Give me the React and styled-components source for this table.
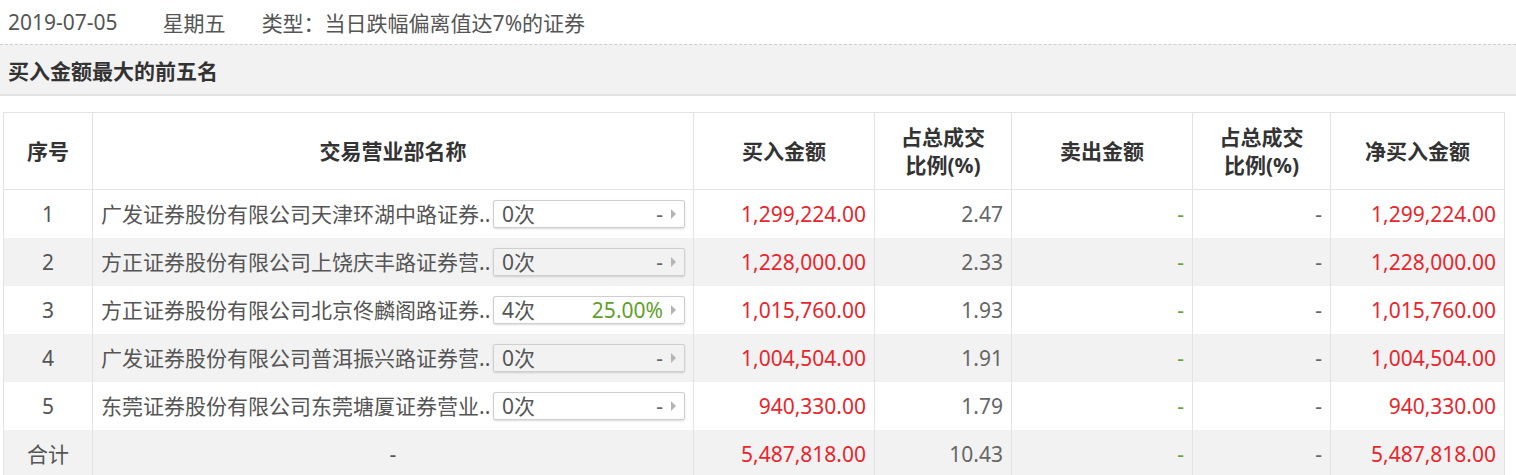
import React from "react";
import styled, { createGlobalStyle } from "styled-components";

const GlobalStyle = createGlobalStyle`
  html, body {
    margin: 0;
    padding: 0;
    background: #fff;
  }
  body {
    font-family: "Noto Sans", "Noto Sans CJK SC", sans-serif;
    color: #555;
  }
`;

const rows = [
  { id: 1, name: "广发证券股份有限公司天津环湖中路证券..", times: "0次", rate: "-", buy: "1,299,224.00", buyPct: "2.47", net: "1,299,224.00" },
  { id: 2, name: "方正证券股份有限公司上饶庆丰路证券营..", times: "0次", rate: "-", buy: "1,228,000.00", buyPct: "2.33", net: "1,228,000.00" },
  { id: 3, name: "方正证券股份有限公司北京佟麟阁路证券..", times: "4次", rate: "25.00%", buy: "1,015,760.00", buyPct: "1.93", net: "1,015,760.00" },
  { id: 4, name: "广发证券股份有限公司普洱振兴路证券营..", times: "0次", rate: "-", buy: "1,004,504.00", buyPct: "1.91", net: "1,004,504.00" },
  { id: 5, name: "东莞证券股份有限公司东莞塘厦证券营业..", times: "0次", rate: "-", buy: "940,330.00", buyPct: "1.79", net: "940,330.00" },
];

const Page = styled.div`
  width: 1516px;
`;

const InfoLine = styled.div`
  display: flex;
  align-items: center;
  height: 44px;
  padding-left: 8px;
  font-size: 21px;
  color: #555;
`;

const InfoItem = styled.span`
  margin-right: ${(p) => p.$gap || 0}px;
`;

const SectionTitle = styled.div`
  height: 49px;
  display: flex;
  align-items: center;
  padding-left: 8px;
  background: #f2f2f2;
  border-top: 1px dashed #cfcfcf;
  border-bottom: 2px solid #e2e2e2;
  font-size: 21px;
  font-weight: 700;
  color: #333;
`;

const Table = styled.table`
  margin: 16px 0 0 3px;
  width: 1501px;
  table-layout: fixed;
  border-collapse: collapse;
  font-size: 21px;
  border: 1px solid #e3e3e3;
`;

const HeadCell = styled.th`
  height: 76px;
  padding: 0 6px;
  font-weight: 700;
  color: #333;
  line-height: 28px;
  text-align: center;
  border: 1px solid #e3e3e3;
`;

const Row = styled.tr`
  background: ${(p) => (p.$shaded ? "#f2f2f2" : "#fff")};
`;

const Cell = styled.td`
  height: 48px;
  padding: 0 8px;
  text-align: ${(p) => p.$align || "left"};
  color: ${(p) => p.$color || "#555"};
  border-left: 1px solid #e3e3e3;
  border-right: 1px solid #e3e3e3;
  white-space: nowrap;
  line-height: 28px;
`;

const NameWrap = styled.div`
  display: flex;
  align-items: center;
  justify-content: space-between;
`;

const NameText = styled.span`
  overflow: hidden;
  white-space: nowrap;
`;

const CountBox = styled.div`
  flex: 0 0 192px;
  box-sizing: border-box;
  height: 28px;
  display: flex;
  align-items: center;
  padding: 0 8px;
  margin-left: 3px;
  border: 1px solid #cfcfcf;
  border-radius: 2px;
  box-shadow: 0 1px 2px rgba(0, 0, 0, 0.15);
  color: #555;
`;

const Times = styled.span`
  flex: 1;
`;

const Rate = styled.span`
  color: ${(p) => (p.$active ? "#5f9f2b" : "#666")};
`;

const Arrow = styled.span`
  margin-left: 8px;
  width: 0;
  height: 0;
  border-top: 5px solid transparent;
  border-bottom: 5px solid transparent;
  border-left: 5px solid #b5b5b5;
`;

const RED = "#e8262d";
const GREEN = "#6aa339";

export default function App() {
  return (
    <Page>
      <GlobalStyle />
      <InfoLine>
        <InfoItem $gap={45}>2019-07-05</InfoItem>
        <InfoItem $gap={36}>星期五</InfoItem>
        <InfoItem>类型：当日跌幅偏离值达7%的证券</InfoItem>
      </InfoLine>
      <SectionTitle>买入金额最大的前五名</SectionTitle>
      <Table>
        <colgroup>
          <col style={{ width: 89 }} />
          <col style={{ width: 601 }} />
          <col style={{ width: 181 }} />
          <col style={{ width: 137 }} />
          <col style={{ width: 181 }} />
          <col style={{ width: 138 }} />
          <col style={{ width: 174 }} />
        </colgroup>
        <thead>
          <tr>
            <HeadCell>序号</HeadCell>
            <HeadCell>交易营业部名称</HeadCell>
            <HeadCell>买入金额</HeadCell>
            <HeadCell>占总成交<br />比例(%)</HeadCell>
            <HeadCell>卖出金额</HeadCell>
            <HeadCell>占总成交<br />比例(%)</HeadCell>
            <HeadCell>净买入金额</HeadCell>
          </tr>
        </thead>
        <tbody>
          {rows.map((r, i) => (
            <Row key={r.id} $shaded={i % 2 === 1}>
              <Cell $align="center">{r.id}</Cell>
              <Cell>
                <NameWrap>
                  <NameText>{r.name}</NameText>
                  <CountBox>
                    <Times>{r.times}</Times>
                    <Rate $active={r.rate !== "-"}>{r.rate}</Rate>
                    <Arrow />
                  </CountBox>
                </NameWrap>
              </Cell>
              <Cell $align="right" $color={RED}>{r.buy}</Cell>
              <Cell $align="right" $color="#666">{r.buyPct}</Cell>
              <Cell $align="right" $color={GREEN}>-</Cell>
              <Cell $align="right" $color="#666">-</Cell>
              <Cell $align="right" $color={RED}>{r.net}</Cell>
            </Row>
          ))}
          <Row $shaded>
            <Cell $align="center">合计</Cell>
            <Cell $align="center">-</Cell>
            <Cell $align="right" $color={RED}>5,487,818.00</Cell>
            <Cell $align="right" $color="#666">10.43</Cell>
            <Cell $align="right" $color={GREEN}>-</Cell>
            <Cell $align="right" $color="#666">-</Cell>
            <Cell $align="right" $color={RED}>5,487,818.00</Cell>
          </Row>
        </tbody>
      </Table>
    </Page>
  );
}
